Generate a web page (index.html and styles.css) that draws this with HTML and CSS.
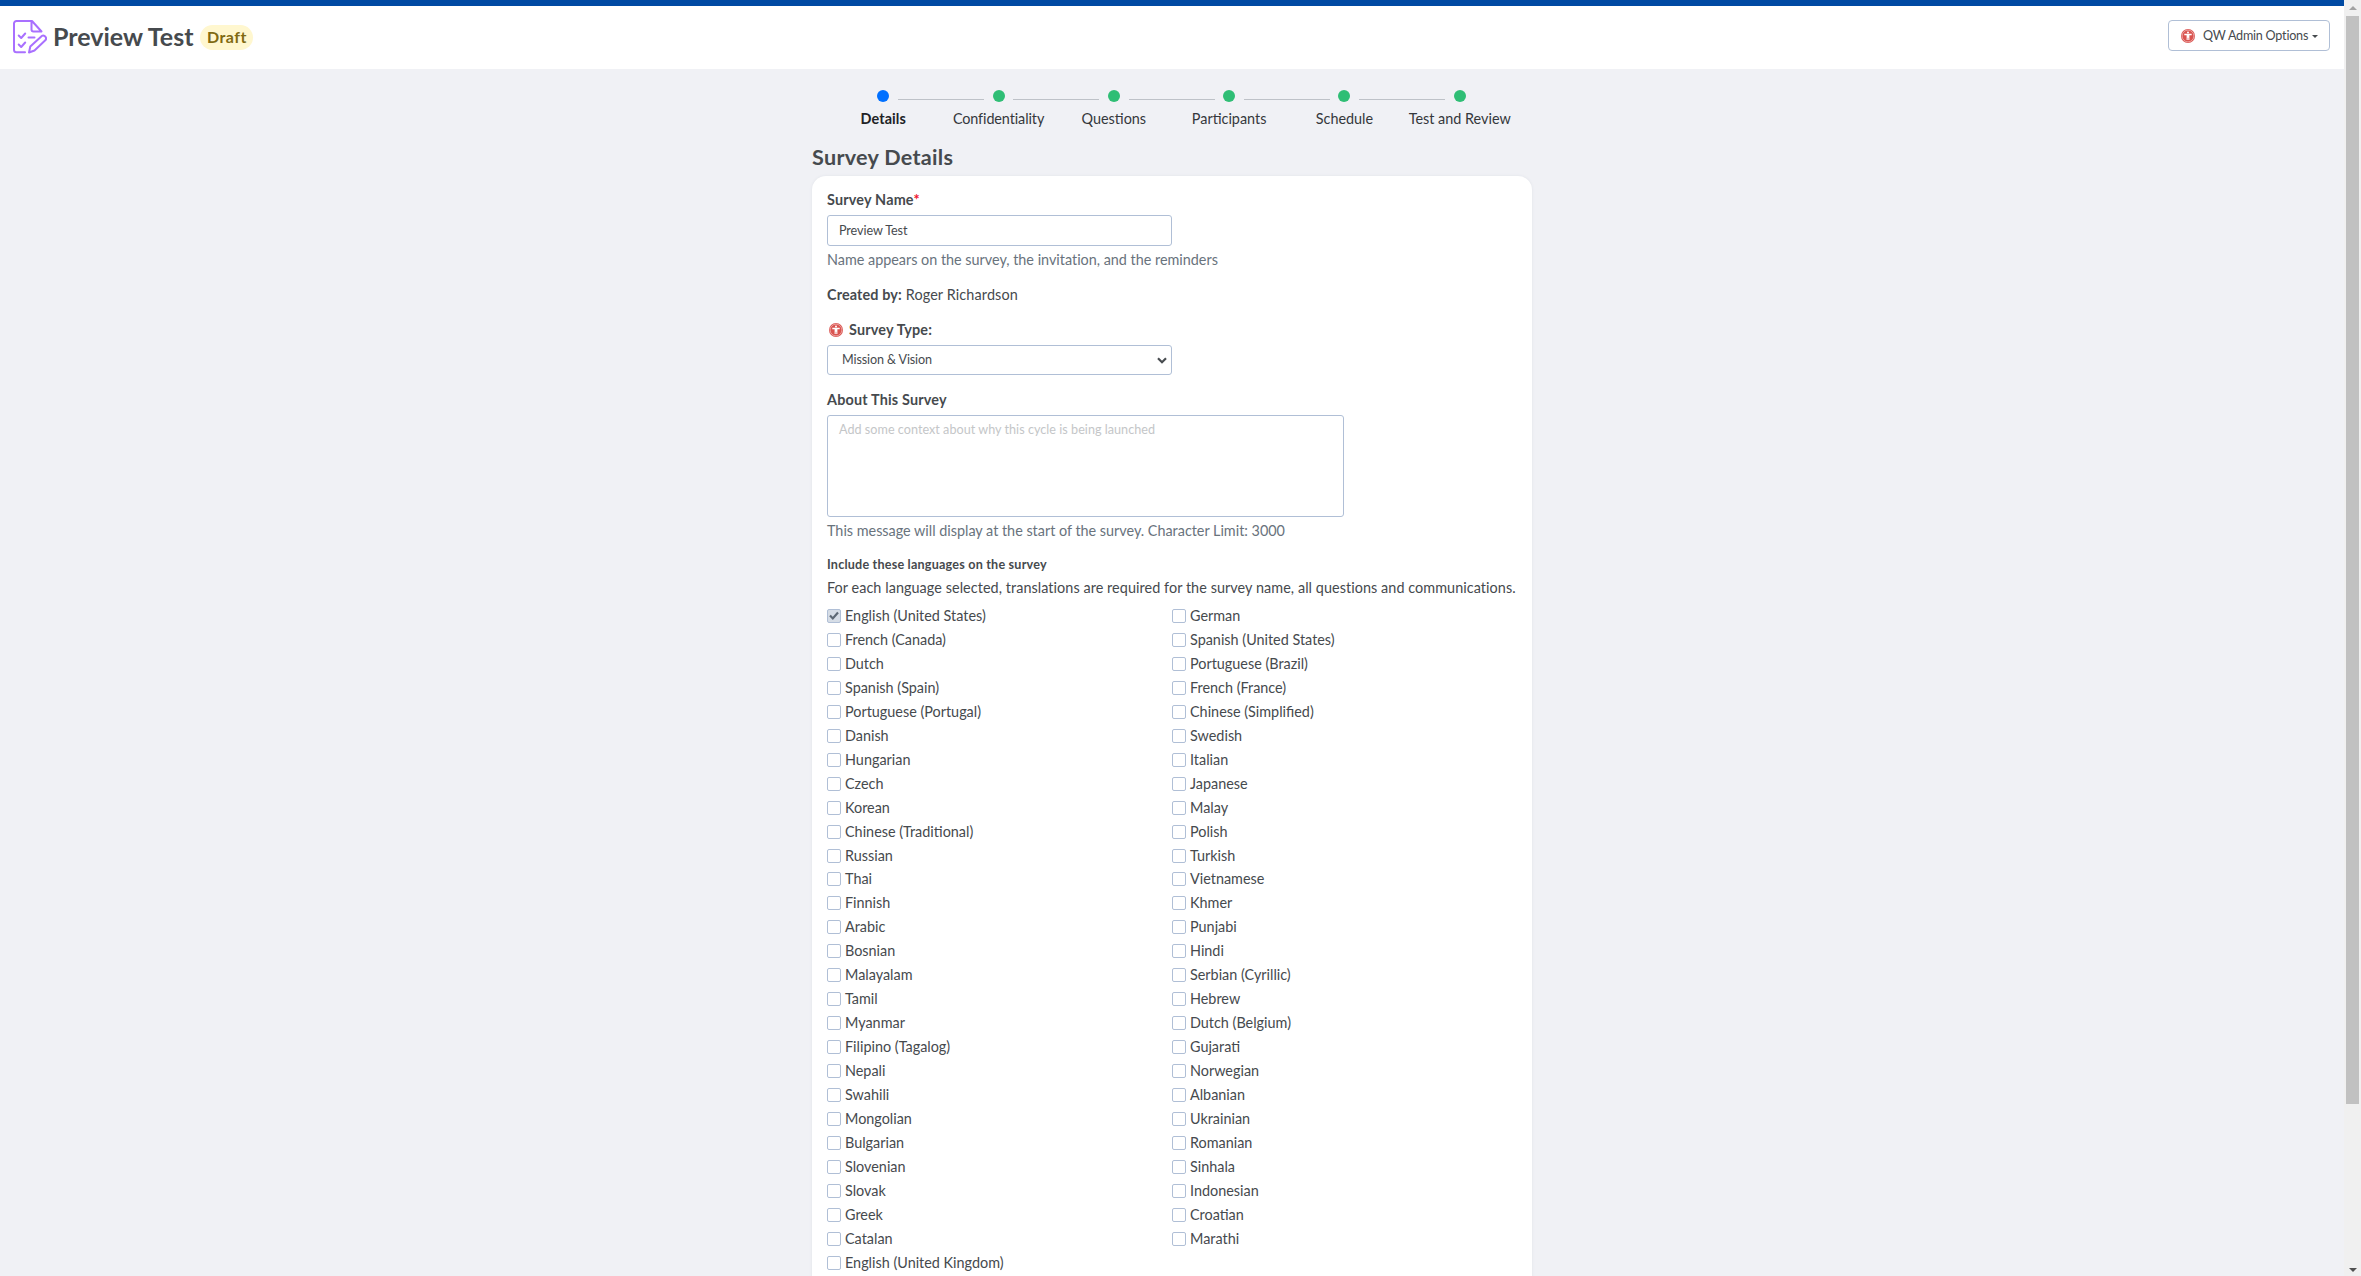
FILE: index.html
```
<!DOCTYPE html>
<html lang="en">
<head>
<meta charset="utf-8">
<title>Preview Test</title>
<link rel="stylesheet" href="styles.css">
</head>
<body>
<svg class="defs" aria-hidden="true">
  <symbol id="admin" viewBox="0 0 14 14">
    <circle cx="7" cy="7" r="7" fill="#d9534f"/>
    <circle cx="7" cy="7" r="5.900" fill="none" stroke="#f3c0be" stroke-width=".7"/>
    <circle cx="7" cy="3.500" r="1" fill="#fff"/>
    <path d="M3.300 4.800h7.400v1.400H8.400V11H7.300V8.700h-.6V11H5.600V6.200H3.300z" fill="#fff"/>
  </symbol>
</svg>
<div class="page">
  <header class="header">
    <svg class="logo" viewBox="0 0 34 34" fill="none" stroke="#a970ff" stroke-width="2" stroke-linecap="round" stroke-linejoin="round">
      <path d="M12 32.200H3.500a2.500 2.500 0 0 1-2.500-2.500V3.500A2.500 2.500 0 0 1 3.500 1H19l9.500 10.500H20.500a2 2 0 0 1-2-2V1"/>
      <path d="M5.700 15.500l2.500 2.500 4-4.500M5.700 24.500l2.500 2.500 4-4.500M15.500 17.500h6"/>
      <path d="M16 32.500l1.300-6L28 16.700a2.700 2.700 0 0 1 4.300 3.600L21.500 30.500z"/>
    </svg>
    <h1 class="title">Preview Test</h1>
    <span class="badge">Draft</span>
    <button class="admin-btn"><svg class="admin-icon"><use href="#admin"/></svg><span>QW Admin Options</span><i class="caret"></i></button>
  </header>
  <main class="main">
    <ol class="steps">
      <li class="step current"><i></i>Details</li>
      <li class="step"><i></i><span class="tight">Confidentiality</span></li>
      <li class="step"><i></i>Questions</li>
      <li class="step"><i></i>Participants</li>
      <li class="step"><i></i>Schedule</li>
      <li class="step"><i></i>Test and Review</li>
    </ol>
    <h2 class="heading">Survey Details</h2>
    <section class="card">
      <label class="label">Survey Name<span class="required">*</span></label>
      <div class="control"><span>Preview Test</span></div>
      <p class="help">Name appears on the survey, the invitation, and the reminders</p>
      <p class="created"><b>Created by:</b> <span>Roger Richardson</span></p>
      <label class="label type"><svg class="type-icon"><use href="#admin"/></svg>Survey Type:</label>
      <div class="control select"><span>Mission &amp; Vision</span><svg class="chevron" viewBox="0 0 10 7"><path d="M1 1.200l4 4 4-4" fill="none" stroke="#484c50" stroke-width="2.200"/></svg></div>
      <label class="label about">About This Survey</label>
      <div class="textarea">Add some context about why this cycle is being launched</div>
      <p class="help">This message will display at the start of the survey. Character Limit: 3000</p>
      <h3 class="subheading">Include these languages on the survey</h3>
      <p class="note">For each language selected, translations are required for the survey name, all questions and communications.</p>
      <div class="languages">
        <label class="lang checked"><i><svg viewBox="0 0 12 12"><path d="M2 5.600l2.800 2.900L10 2.600" fill="none" stroke="#5d6874" stroke-width="2.200"/></svg></i>English (United States)</label><label class="lang"><i></i>German</label>
        <label class="lang"><i></i>French (Canada)</label><label class="lang"><i></i>Spanish (United States)</label>
        <label class="lang"><i></i>Dutch</label><label class="lang"><i></i>Portuguese (Brazil)</label>
        <label class="lang"><i></i>Spanish (Spain)</label><label class="lang"><i></i>French (France)</label>
        <label class="lang"><i></i>Portuguese (Portugal)</label><label class="lang"><i></i>Chinese (Simplified)</label>
        <label class="lang"><i></i>Danish</label><label class="lang"><i></i>Swedish</label>
        <label class="lang"><i></i>Hungarian</label><label class="lang"><i></i>Italian</label>
        <label class="lang"><i></i>Czech</label><label class="lang"><i></i>Japanese</label>
        <label class="lang"><i></i>Korean</label><label class="lang"><i></i>Malay</label>
        <label class="lang"><i></i>Chinese (Traditional)</label><label class="lang"><i></i>Polish</label>
        <label class="lang"><i></i>Russian</label><label class="lang"><i></i>Turkish</label>
        <label class="lang"><i></i>Thai</label><label class="lang"><i></i>Vietnamese</label>
        <label class="lang"><i></i>Finnish</label><label class="lang"><i></i>Khmer</label>
        <label class="lang"><i></i>Arabic</label><label class="lang"><i></i>Punjabi</label>
        <label class="lang"><i></i>Bosnian</label><label class="lang"><i></i>Hindi</label>
        <label class="lang"><i></i>Malayalam</label><label class="lang"><i></i>Serbian (Cyrillic)</label>
        <label class="lang"><i></i>Tamil</label><label class="lang"><i></i>Hebrew</label>
        <label class="lang"><i></i>Myanmar</label><label class="lang"><i></i>Dutch (Belgium)</label>
        <label class="lang"><i></i>Filipino (Tagalog)</label><label class="lang"><i></i>Gujarati</label>
        <label class="lang"><i></i>Nepali</label><label class="lang"><i></i>Norwegian</label>
        <label class="lang"><i></i>Swahili</label><label class="lang"><i></i>Albanian</label>
        <label class="lang"><i></i>Mongolian</label><label class="lang"><i></i>Ukrainian</label>
        <label class="lang"><i></i>Bulgarian</label><label class="lang"><i></i>Romanian</label>
        <label class="lang"><i></i>Slovenian</label><label class="lang"><i></i>Sinhala</label>
        <label class="lang"><i></i>Slovak</label><label class="lang"><i></i>Indonesian</label>
        <label class="lang"><i></i>Greek</label><label class="lang"><i></i>Croatian</label>
        <label class="lang"><i></i>Catalan</label><label class="lang"><i></i>Marathi</label>
        <label class="lang"><i></i>English (United Kingdom)</label>
      </div>
    </section>
  </main>
</div>
<div class="scrollbar"><i class="arrow up"></i><div class="thumb"></div><i class="arrow down"></i></div>
</body>
</html>
```
FILE: styles.css
```
* { box-sizing: border-box; }
body {
  margin: 0; height: 1276px; overflow: hidden;
  display: grid; grid-template-columns: 1fr 17px;
  background: #f0f1f5; color: #464a4e;
  font: 14.4px/20px Lato, "Liberation Sans", sans-serif;
}
h1, h2, h3, p, ol { margin: 0; padding: 0; }
.defs { position: absolute; width: 0; height: 0; }
.page { height: 1276px; overflow: hidden; border-top: 6px solid #004aa3; }

.header { height: 63px; padding: 0 14px 0 13px; display: flex; align-items: flex-start; background: #fff; }
.logo { width: 34px; height: 34px; margin-top: 14px; flex: none; }
.title { margin: 14px 0 0 6px; font-size: 25px; line-height: 32px; font-weight: 700; white-space: nowrap; }
.badge {
  width: 53px; height: 25px; margin: 19px 0 0 7px; border-radius: 13px;
  background: #fff7cf; color: #806a12;
  font-size: 16px; line-height: 24px; font-weight: 700; letter-spacing: .5px; text-align: center;
}
.admin-btn {
  width: 162px; height: 31px; margin: 14px 0 0 auto; padding: 0 0 0 12px;
  display: flex; align-items: center; white-space: nowrap;
  border: 1px solid #b0bfd6; border-radius: 4px; background: #fff; color: #464a4e;
  font: 12.6px/28px Lato, sans-serif; letter-spacing: -.23px;
}
.admin-icon { width: 14px; height: 14px; margin-right: 8px; }
.caret { margin: 1px 0 0 4px; border: 3px solid transparent; border-top-color: #464a4e; border-bottom: 0; }

.main { width: 720px; margin: 0 auto; }
.steps { display: grid; grid-template-columns: repeat(6, 115.3px); padding: 21px 0 0 13.6px; list-style: none; }
.step { position: relative; text-align: center; white-space: nowrap; color: #35383c; line-height: 20px; }
.step i { display: block; width: 12px; height: 12px; margin: 0 auto 7px; border-radius: 50%; background: #2fbe75; }
.step:not(:last-child)::after { content: ""; position: absolute; left: 72.5px; top: 9px; width: 86px; height: 1px; background: #bec2c8; }
.step.current { font-weight: 700; color: #202225; letter-spacing: .1px; }
.step.current i { background: #0070ff; }
.tight { letter-spacing: -.1px; }
.heading { margin-top: 14px; font-size: 21.6px; line-height: 28px; letter-spacing: .28px; }
.card {
  height: 1200px; margin-top: 5px; padding: 14px 0 0 15px;
  border-radius: 14px; background: #fff; box-shadow: 0 0 3px #dfe2e8;
}
.label { display: block; line-height: 20px; font-weight: 700; letter-spacing: .18px; }
.required { color: #f0142f; }
.control {
  width: 345px; height: 31px; margin-top: 5px; padding: 0 11px;
  display: flex; align-items: center; justify-content: space-between;
  border: 1px solid #b0bfd6; border-radius: 3px;
  font-size: 12.6px; letter-spacing: -.08px;
}
.select { height: 30px; padding: 0 4px 0 14px; letter-spacing: -.12px; }
.chevron { width: 10px; height: 7px; }
.help { margin-top: 4px; line-height: 20px; color: #69737d; letter-spacing: -.01px; }
.created { margin-top: 15px; line-height: 20px; letter-spacing: .13px; }
.type { margin-top: 15px; display: flex; align-items: center; }
.type-icon { width: 14px; height: 14px; margin: 0 6px 0 2px; }
.about { margin-top: 15px; }
.textarea {
  width: 517px; height: 102px; margin-top: 5px; padding: 4px 11px;
  border: 1px solid #b0bfd6; border-radius: 3px;
  color: #c4c6c8; font-size: 12.6px; line-height: 20px; letter-spacing: .03px;
}
.subheading { margin-top: 14px; font-size: 12.6px; line-height: 20px; letter-spacing: .2px; }
.note { margin-top: 3px; line-height: 20px; white-space: nowrap; letter-spacing: .065px; }
.languages { margin-top: 6px; display: grid; grid-template-columns: 345px 345px; grid-auto-rows: 23.96px; }
.lang { display: flex; align-items: center; line-height: 20px; }
.lang i { width: 14px; height: 14px; margin-right: 4px; border: 1px solid #b0bfd6; border-radius: 2px; background: #fff; display: flex; }
.lang.checked i { background: #d6dde6; }

.scrollbar { height: 1276px; background: #f0f0f0; display: flex; flex-direction: column; align-items: center; padding: 6px 2px 4px; }
.thumb { width: 13px; height: 1088px; margin-top: 6px; background: #c1c1c1; }
.arrow { border: 4px solid transparent; }
.up { border-top: 0; border-bottom-color: #a3a3a3; }
.down { border-bottom: 0; border-top-color: #505050; margin-top: auto; }
```
